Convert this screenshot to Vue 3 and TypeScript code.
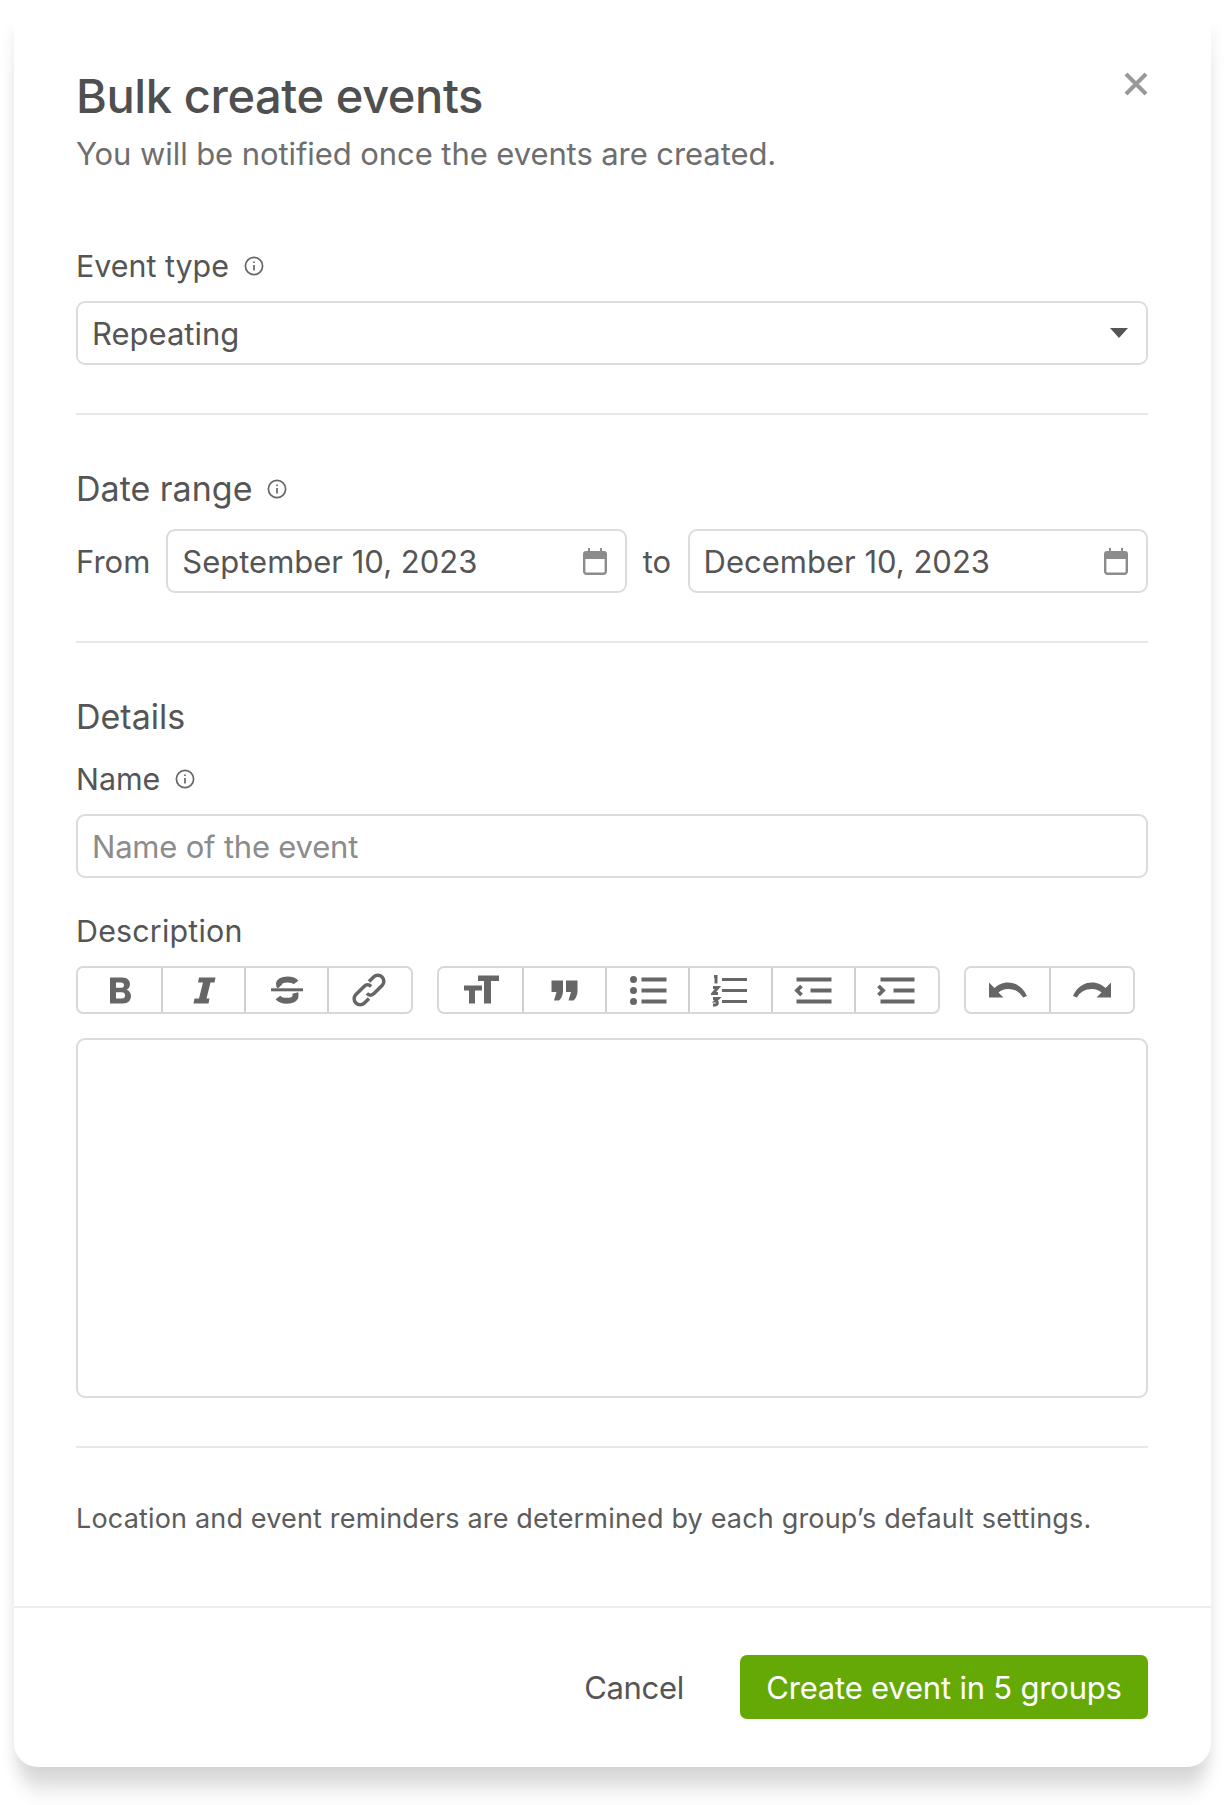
<script setup lang="ts">
interface ToolIcon {
  name: string
  fill?: string
  stroke?: string
  width?: number
  transform?: string
}

const hLines = (a: number, b: number, c: number, x1: number, x2: number, mid = x1) =>
  `M${x1} ${a}H${x2}M${mid} ${b}H${x2}M${x1} ${c}H${x2}`

const toolbar: ToolIcon[][] = [
  [
    {
      name: 'bold',
      fill: 'M10 2.5H22C28 2.5 30 6 30 9C30 12 28.5 14 26.5 14.8C29 15.5 31 18 31 21C31 25.5 28 28.5 23 28.5H10ZM16 7.5V12.8H21C23 12.8 24 11.6 24 10.2C24 8.7 23 7.5 21 7.5ZM16 17.3V23.5H22C24 23.5 25 22.2 25 20.4C25 18.6 24 17.3 22 17.3Z'
    },
    { name: 'italic', fill: 'M15 2.5H31.5L30.5 7.5H26.5L22.5 23.5H25.5L24.5 28.5H9.5L10.5 23.5H15L19 7.5H14Z' },
    {
      name: 'strike',
      fill: 'M4 13.3H36V16.3H4Z',
      stroke: 'M29 7.5C27 5 24 4.5 20.5 4.5C15 4.5 12 6.5 12 9C12 10 12.3 10.8 13 11.5M28.3 18C28.5 18.8 28.5 19.6 28.5 20.5C28.5 24 25 25.8 20 25.8C16 25.8 13 25 11 22.5',
      width: 6
    },
    {
      name: 'link',
      stroke: 'M4 -1C4 -4 2 -6 -1 -6H-12.5A6 6 0 0 0 -12.5 6H-6M-4 1C-4 4 -2 6 1 6H12.5A6 6 0 0 0 12.5 -6H6',
      width: 3.5,
      transform: 'translate(19 15) rotate(-45)'
    }
  ],
  [
    { name: 'heading', fill: 'M17 .5H38V6H30V28.5H23V6H17ZM3 10.5H21V15.5H14V28.5H8V15.5H3Z' },
    { name: 'quote', fill: 'M6.5 5.5H18V16C18 20 16 24 14 25.5H9L11.5 17H6.5ZM21 5.5H32.5V16C32.5 20 30.5 24 28.5 25.5H23.5L26 17H21Z' },
    {
      name: 'bullets',
      fill: 'M2 4.5a3.5 3.5 0 1 0 7 0a3.5 3.5 0 1 0-7 0ZM2 15.5a3.5 3.5 0 1 0 7 0a3.5 3.5 0 1 0-7 0ZM2 26.5a3.5 3.5 0 1 0 7 0a3.5 3.5 0 1 0-7 0Z',
      stroke: hLines(4.5, 15.5, 26.5, 13.5, 38.5),
      width: 4
    },
    {
      name: 'numbers',
      stroke: hLines(4.5, 15.5, 26.5, 11, 36) + 'M3 1.5H5V8.5M2 12.5H7L2 18.5H7M2 23.5H7L4.5 26C7 26 7 30 4 30H2',
      width: 3
    },
    {
      name: 'outdent',
      stroke: hLines(4.5, 15.5, 26.5, 2.5, 37.5, 16.5) + 'M7.5 11L3 15.5L7.5 20',
      width: 3.8
    },
    {
      name: 'indent',
      stroke: hLines(4.5, 15.5, 26.5, 3.5, 37.5, 16.5) + 'M1.5 11L6 15.5L1.5 20',
      width: 3.8
    }
  ],
  [
    {
      name: 'undo',
      fill: 'M1 7.5V22.5H15.5L10.5 17.5C13 15.5 16 14 20 14C27 14 32 17 35 22.5L39 21C35 12 28 7.5 20 7.5C14 7.5 9.5 10 6.5 13Z'
    },
    {
      name: 'redo',
      fill: 'M1 7.5V22.5H15.5L10.5 17.5C13 15.5 16 14 20 14C27 14 32 17 35 22.5L39 21C35 12 28 7.5 20 7.5C14 7.5 9.5 10 6.5 13Z',
      transform: 'translate(40 0) scale(-1 1)'
    }
  ]
]

const dates = ['September 10, 2023', 'December 10, 2023']
</script>

<template>
  <div class="page">
    <div class="modal">
      <button class="close" aria-label="Close">
        <svg width="24" height="24" viewBox="0 0 24 24">
          <path d="M2 2L22 22M22 2L2 22" stroke="#999" stroke-width="4" fill="none" />
        </svg>
      </button>

      <div class="body">
        <h1 class="title">Bulk create events</h1>
        <p class="subtitle">You will be notified once the events are created.</p>

        <label class="label first">
          Event type
          <svg class="info" viewBox="0 0 20 20"><circle cx="10" cy="10" r="8.6" /><path d="M10 9V14.5M10 5.5V7" /></svg>
        </label>
        <div class="field select">
          <span>Repeating</span>
          <svg class="caret" width="18" height="10" viewBox="0 0 18 10"><path d="M0 0H18L9 10Z" fill="#555" /></svg>
        </div>

        <hr class="rule" />

        <h2 class="section">
          Date range
          <svg class="info" viewBox="0 0 20 20"><circle cx="10" cy="10" r="8.6" /><path d="M10 9V14.5M10 5.5V7" /></svg>
        </h2>
        <div class="date-row">
          <span>From</span>
          <template v-for="(date, i) in dates" :key="date">
            <span v-if="i === 1" class="to">to</span>
            <div class="field date">
              <span>{{ date }}</span>
              <svg class="cal" width="24" height="27" viewBox="0 0 24 27">
                <path d="M0 6a3 3 0 0 1 3-3H5V0H7V3H17V0H19V3H21a3 3 0 0 1 3 3V11H0Z" fill="#8c8c8c" />
                <path d="M1.2 10V23.5a2.3 2.3 0 0 0 2.3 2.3H20.5a2.3 2.3 0 0 0 2.3-2.3V10" fill="none" stroke="#8c8c8c" stroke-width="2.4" />
              </svg>
            </div>
          </template>
        </div>

        <hr class="rule" />

        <h2 class="section details">Details</h2>
        <label class="label name">
          Name
          <svg class="info" viewBox="0 0 20 20"><circle cx="10" cy="10" r="8.6" /><path d="M10 9V14.5M10 5.5V7" /></svg>
        </label>
        <div class="field placeholder">Name of the event</div>

        <label class="label desc">Description</label>
        <div class="toolbar">
          <div v-for="(group, g) in toolbar" :key="g" class="tool-group">
            <button v-for="tool in group" :key="tool.name" class="tool" :aria-label="tool.name">
              <svg width="40" height="36" viewBox="0 -3 40 36">
                <g :transform="tool.transform">
                  <path v-if="tool.fill" :d="tool.fill" fill="#666" />
                  <path v-if="tool.stroke" :d="tool.stroke" fill="none" stroke="#666" :stroke-width="tool.width" />
                </g>
              </svg>
            </button>
          </div>
        </div>
        <div class="editor"></div>

        <hr class="rule last" />

        <p class="note">Location and event reminders are determined by each group’s default settings.</p>
      </div>

      <div class="footer">
        <button class="cancel">Cancel</button>
        <button class="submit">Create event in 5 groups</button>
      </div>
    </div>
  </div>
</template>

<style>
html, body {
  background: #fff;
}
</style>

<style scoped>
.page {
  padding: 20px 14px 38px;
  font-family: Inter, "Liberation Sans", sans-serif;
  color: #555;
}

.modal {
  position: relative;
  height: 1747px;
  box-sizing: border-box;
  background: #fff;
  border-radius: 0 0 24px 24px;
  box-shadow: 0 10px 16px rgba(0, 0, 0, 0.08), 0 31px 18px -6px rgba(0, 0, 0, 0.1);
  display: flex;
  flex-direction: column;
}

.close {
  position: absolute;
  top: 52px;
  right: 63px;
  padding: 0;
  border: 0;
  background: none;
  line-height: 0;
}

.body {
  flex: 1;
  padding: 48px 63px 0 62px;
}

.title {
  margin: 0;
  font-size: 47px;
  line-height: 56px;
  font-weight: 500;
  letter-spacing: -0.4px;
  color: #4f4f4f;
}

.subtitle {
  margin: 8px 0 0;
  font-size: 31px;
  line-height: 44px;
  letter-spacing: -0.08px;
  color: #6e6e6e;
}

.label {
  display: flex;
  align-items: center;
  font-size: 30.4px;
  line-height: 40px;
  color: #555;
}

.first {
  margin-top: 70px;
}

.name {
  margin-top: 20px;
}

.desc {
  margin-top: 33px;
  letter-spacing: 0.2px;
}

.info {
  width: 20px;
  height: 20px;
  margin-left: 15px;
  fill: none;
  stroke: #666;
  stroke-width: 1.7;
}

.field {
  height: 64px;
  box-sizing: border-box;
  border: 2px solid #dcdcdc;
  border-radius: 9px;
  padding: 0 14px;
  display: flex;
  align-items: center;
  justify-content: space-between;
  font-size: 31px;
  color: #555;
  background: #fff;
}

.select {
  margin-top: 15px;
  padding-right: 18px;
}

.placeholder {
  margin-top: 15px;
  letter-spacing: -0.2px;
  color: #8c8c8c;
}

.rule {
  margin: 48px 0 0;
  border: 0;
  border-top: 2px solid #e8e8e8;
}

.section {
  margin: 0;
  padding-top: 52px;
  display: flex;
  align-items: center;
  font-size: 34px;
  line-height: 44px;
  font-weight: 400;
  color: #555;
}

.details {
  padding-top: 52px;
}

.date-row {
  margin-top: 18px;
  display: flex;
  align-items: center;
  gap: 16px;
  font-size: 31px;
}

.to {
  margin-right: 0.4px;
}

.date {
  flex: 1;
  padding-right: 18px;
}

.toolbar {
  margin-top: 15px;
  display: flex;
  gap: 24px;
}

.tool-group {
  display: flex;
  border: 2px solid #d8d8d8;
  border-radius: 7px;
}

.tool {
  width: 83px;
  height: 44px;
  padding: 0;
  border: 0;
  border-left: 2px solid #d0d0d0;
  background: none;
  display: flex;
  align-items: center;
  justify-content: center;
}

.tool:first-child {
  border-left: 0;
}

.tool:last-child {
  width: 84px;
}

.editor {
  margin-top: 24px;
  height: 360px;
  box-sizing: border-box;
  border: 2px solid #dcdcdc;
  border-radius: 9px;
}

.note {
  margin: 51px 0 0;
  font-size: 27px;
  line-height: 40px;
  letter-spacing: 0.17px;
  color: #5c5c5c;
}

.footer {
  border-top: 2px solid #ededed;
  height: 161px;
  box-sizing: border-box;
  padding: 47px 63px 0 62px;
  display: flex;
  justify-content: flex-end;
  align-items: flex-start;
  gap: 56px;
}

.cancel,
.submit {
  height: 64px;
  padding: 0;
  border: 0;
  background: none;
  font-family: inherit;
  font-size: 31px;
  color: #555;
}

.cancel {
  letter-spacing: -0.3px;
}

.submit {
  width: 408px;
  border-radius: 7px;
  letter-spacing: -0.2px;
  background: #65a907;
  color: #fff;
}
</style>
